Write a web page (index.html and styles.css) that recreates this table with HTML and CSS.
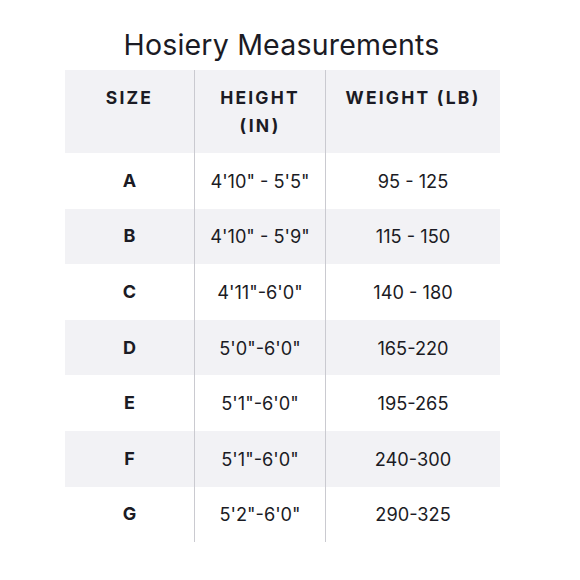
FILE: index.html
```html
<!DOCTYPE html>
<html>
<head>
<meta charset="utf-8">
<link rel="stylesheet" href="styles.css">
</head>
<body>
<div class="sheet">
  <h1 class="title">Hosiery Measurements</h1>
  <table class="chart">
    <thead>
      <tr>
        <th class="c-size">SIZE</th>
        <th class="c-height">HEIGHT<br>(IN)</th>
        <th class="c-weight">WEIGHT (LB)</th>
      </tr>
    </thead>
    <tbody>
      <tr><td class="size">A</td><td>4'10" - 5'5"</td><td>95 - 125</td></tr>
      <tr class="alt"><td class="size">B</td><td>4'10" - 5'9"</td><td>115 - 150</td></tr>
      <tr><td class="size">C</td><td>4'11"-6'0"</td><td>140 - 180</td></tr>
      <tr class="alt"><td class="size">D</td><td>5'0"-6'0"</td><td>165-220</td></tr>
      <tr><td class="size">E</td><td>5'1"-6'0"</td><td>195-265</td></tr>
      <tr class="alt"><td class="size">F</td><td>5'1"-6'0"</td><td>240-300</td></tr>
      <tr><td class="size">G</td><td>5'2"-6'0"</td><td>290-325</td></tr>
    </tbody>
  </table>
</div>
</body>
</html>
```
FILE: styles.css
```css
html, body {
  margin: 0;
  padding: 0;
  background: #ffffff;
}
body {
  font-family: Inter, "Noto Sans", sans-serif;
  color: #1b1b24;
}
.sheet {
  width: 433px;
  margin-left: 65px;
  padding-top: 28px;
}
.title {
  margin: 0 0 8px 0;
  font-size: 28.5px;
  line-height: 34px;
  font-weight: 400;
  text-align: center;
  letter-spacing: 0.2px;
  white-space: nowrap;
}
.chart {
  width: 433px;
  border-collapse: collapse;
  table-layout: fixed;
}
.chart th, .chart td {
  padding: 0;
  text-align: center;
}
.c-size { width: 129px; }
.c-height { width: 130px; }
.c-weight { width: 174px; }
.chart th + th, .chart td + td {
  border-left: 1px solid #cacad0;
}
.chart thead tr {
  background: #f2f2f5;
  height: 83px;
}
.chart th {
  vertical-align: top;
  padding-top: 14px;
  font-size: 17.5px;
  line-height: 28px;
  font-weight: 700;
  letter-spacing: 2.2px;
}
.chart tbody tr {
  height: 55.6px;
}
.chart tbody tr.alt {
  background: #f2f2f5;
}
.chart td {
  font-size: 18.2px;
  line-height: 22px;
  font-weight: 400;
  vertical-align: middle;
}
.chart td.size {
  font-size: 18px;
  font-weight: 700;
}
```
